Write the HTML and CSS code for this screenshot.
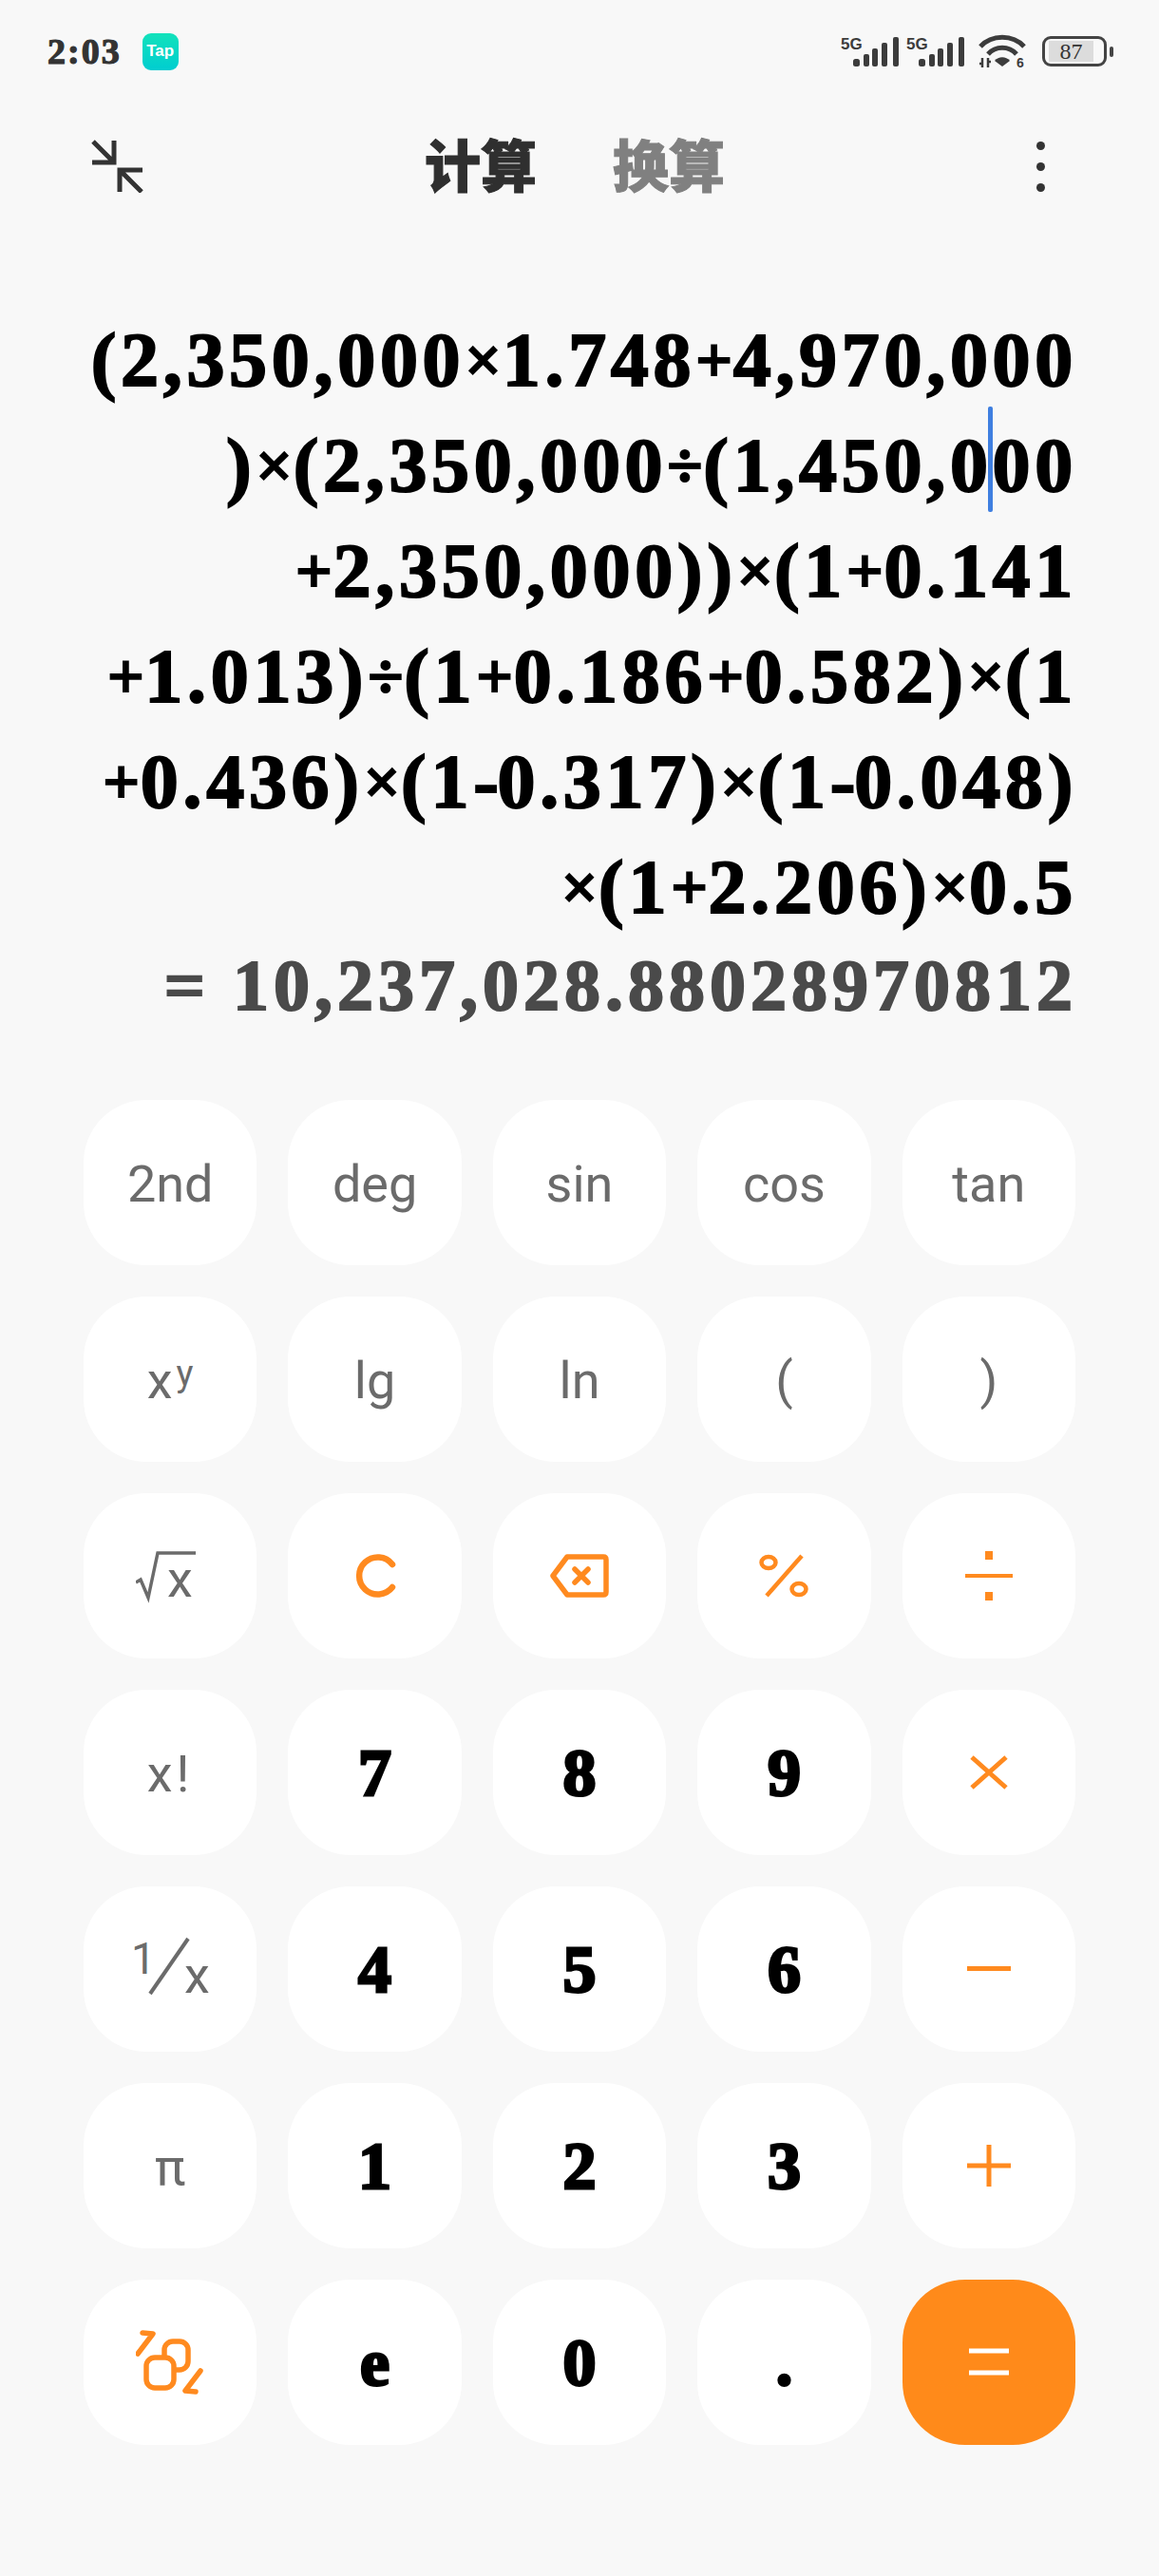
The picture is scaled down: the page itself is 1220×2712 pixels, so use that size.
FILE: index.html
```html
<!DOCTYPE html>
<html>
	<head>
		<meta charset="UTF-8">
		<title>计算器</title>
		<link rel="stylesheet" href="styles.css">
	</head>
	<body>
		<div class="status">
			<div class="status-left">
				<span class="time">2:03</span>
				<span class="tap">Tap</span>
			</div>
			<div class="status-right">
				<svg class="signal" width="63" height="34" viewBox="0 0 63 34">
					<text x="0" y="15" class="five-g">5G</text>
					<g fill="#3c3c3c">
						<rect x="13" y="25" width="7" height="8" rx="2.5"/>
						<rect x="24" y="20" width="6" height="13" rx="2"/>
						<rect x="33" y="14" width="6" height="19" rx="2"/>
						<rect x="43" y="8" width="6" height="25" rx="2"/>
						<rect x="55" y="2" width="6" height="31" rx="2"/>
					</g>
				</svg>
				<svg class="signal" width="63" height="34" viewBox="0 0 63 34">
					<text x="0" y="15" class="five-g">5G</text>
					<g fill="#3c3c3c">
						<rect x="13" y="25" width="7" height="8" rx="2.5"/>
						<rect x="24" y="20" width="6" height="13" rx="2"/>
						<rect x="33" y="14" width="6" height="19" rx="2"/>
						<rect x="43" y="8" width="6" height="25" rx="2"/>
						<rect x="55" y="2" width="6" height="31" rx="2"/>
					</g>
				</svg>
				<svg class="wifi" width="50" height="42" viewBox="0 -2 50 42">
					<g fill="none" stroke="#3c3c3c" stroke-width="5">
						<path d="M2 14 C14 1 36 1 48 14"/>
						<path d="M10 22 C18 13 32 13 40 22"/>
					</g>
					<path d="M17 29 C21 24 29 24 33 29 L25 35 Z" fill="#3c3c3c"/>
					<path d="M4 26 V36 M1 32 H4 M10 26 V36 M10 30 H13" stroke="#3c3c3c" stroke-width="2.5" fill="none"/>
					<text x="40" y="36" class="wifi-six">6</text>
				</svg>
				<div class="battery">
					<div class="battery-body"><span class="battery-level">87</span></div>
					<div class="battery-nub"></div>
				</div>
			</div>
		</div>

		<div class="toolbar">
			<svg class="collapse" width="56" height="56" viewBox="0 0 56 56">
				<path d="M2 2 L24 24 M24 1 V24 H1 M30 32 L53 55 M30 55 V32 H54" fill="none" stroke="#333" stroke-width="5"/>
			</svg>
			<div class="tabs">
				<span class="tab tab-on">计算</span>
				<span class="tab">换算</span>
			</div>
			<div class="more"><i></i><i></i><i></i></div>
		</div>

		<div class="display">
			<div class="line">(2,350,000<span class="o">×</span>1.748<span class="o">+</span>4,970,000</div>
			<div class="line">)<span class="o">×</span>(2,350,000<span class="o">÷</span>(1,450,0<span class="caret"></span>00</div>
			<div class="line"><span class="o">+</span>2,350,000))<span class="o">×</span>(1<span class="o">+</span>0.141</div>
			<div class="line"><span class="o">+</span>1.013)<span class="o">÷</span>(1<span class="o">+</span>0.186<span class="o">+</span>0.582)<span class="o">×</span>(1</div>
			<div class="line"><span class="o">+</span>0.436)<span class="o">×</span>(1<span class="h">-</span>0.317)<span class="o">×</span>(1<span class="h">-</span>0.048)</div>
			<div class="line"><span class="o">×</span>(1<span class="o">+</span>2.206)<span class="o">×</span>0.5</div>
			<div class="result">= 10,237,028.88028970812</div>
		</div>

		<div class="keys">
			<div class="key fn">2nd</div>
			<div class="key fn">deg</div>
			<div class="key fn">sin</div>
			<div class="key fn">cos</div>
			<div class="key fn">tan</div>

			<div class="key fn">x<sup>y</sup></div>
			<div class="key fn">lg</div>
			<div class="key fn">ln</div>
			<div class="key fn">(</div>
			<div class="key fn">)</div>

			<div class="key fn icon">
				<svg class="root" width="64" height="72" viewBox="0 -10 64 72">
					<path d="M0 33 L5 30 L13 49 L23 2 H63" fill="none" stroke="#6b6b6b" stroke-width="3.5"/>
					<text x="33" y="48" class="svg-label">x</text>
				</svg>
			</div>
			<div class="key op">
				<svg width="44" height="46" viewBox="0 0 44 46">
					<path d="M40 11 A19.5 19.5 0 1 0 40 35" fill="none" stroke="#ff8a1f" stroke-width="6.5" stroke-linecap="round"/>
				</svg>
			</div>
			<div class="key op">
				<svg width="62" height="46" viewBox="0 0 62 46">
					<path d="M18 3 H56 Q59 3 59 6 V40 Q59 43 56 43 H18 L3 23 Z" fill="none" stroke="#ff8a1f" stroke-width="5.5" stroke-linejoin="round"/>
					<path d="M26 16 L40 30 M40 16 L26 30" stroke="#ff8a1f" stroke-width="5.5" stroke-linecap="round"/>
				</svg>
			</div>
			<div class="key op">
				<svg width="52" height="46" viewBox="0 0 52 46">
					<g fill="none" stroke="#ff8a1f" stroke-width="4.5">
						<ellipse cx="10" cy="9" rx="7.5" ry="6"/>
						<ellipse cx="42" cy="37" rx="7.5" ry="6"/>
						<path d="M45 2 L8 44"/>
					</g>
				</svg>
			</div>
			<div class="key op">
				<svg width="50" height="54" viewBox="0 0 50 54">
					<rect x="0" y="25" width="50" height="4" fill="#ff8a1f"/>
					<rect x="21" y="1" width="8" height="9" fill="#ff8a1f"/>
					<rect x="21" y="44" width="8" height="9" fill="#ff8a1f"/>
				</svg>
			</div>

			<div class="key fn wide">x!</div>
			<div class="key num">7</div>
			<div class="key num">8</div>
			<div class="key num">9</div>
			<div class="key op">
				<svg width="40" height="40" viewBox="0 0 40 40">
					<path d="M2 4 L38 36 M38 4 L2 36" stroke="#ff8a1f" stroke-width="5"/>
				</svg>
			</div>

			<div class="key fn icon">
				<svg width="82" height="84" viewBox="0 -9 82 84">
					<text x="0" y="38" class="svg-small">1</text>
					<path d="M20 59 L60 1" stroke="#6b6b6b" stroke-width="4"/>
					<text x="56" y="58" class="svg-label">x</text>
				</svg>
			</div>
			<div class="key num">4</div>
			<div class="key num">5</div>
			<div class="key num">6</div>
			<div class="key op">
				<svg width="46" height="6" viewBox="0 0 46 6">
					<rect x="0" y="0" width="46" height="5" fill="#ff8a1f"/>
				</svg>
			</div>

			<div class="key fn">π</div>
			<div class="key num">1</div>
			<div class="key num">2</div>
			<div class="key num">3</div>
			<div class="key op">
				<svg width="46" height="46" viewBox="0 0 46 46">
					<path d="M0 23 H46 M23 1 V45" stroke="#ff8a1f" stroke-width="5"/>
				</svg>
			</div>

			<div class="key op">
				<svg width="72" height="68" viewBox="0 0 72 68">
					<g fill="none" stroke="#ff8a1f" stroke-width="5.5" stroke-linecap="round" stroke-linejoin="round">
						<rect x="30" y="12" width="25" height="30" rx="9"/>
						<rect x="11" y="29" width="29" height="32" rx="9" fill="#fff"/>
						<path d="M2 25 L18 4 L7 3"/>
						<path d="M68 43 L52 64 L63 65"/>
					</g>
				</svg>
			</div>
			<div class="key num">e</div>
			<div class="key num">0</div>
			<div class="key num dot">.</div>
			<div class="key eq">
				<svg width="42" height="29" viewBox="0 0 42 29">
					<path d="M0 3 H42 M0 26 H42" stroke="#fff" stroke-width="5"/>
				</svg>
			</div>
		</div>
	</body>
</html>
```

FILE: styles.css
```css
body{
	margin: 0;
	width: 1220px;
	height: 2712px;
	overflow: hidden;
	background-color: #f8f8f8;
}

/* status bar */
.status{
	display: flex;
	justify-content: space-between;
	align-items: center;
	height: 108px;
	padding: 0 48px 0 50px;
}
.status-left{
	display: flex;
	align-items: center;
	gap: 22px;
}
.time{
	font: bold 38px "Liberation Serif", serif;
	letter-spacing: 2px;
	color: #333;
	-webkit-text-stroke: 1.2px #333;
}
.tap{
	display: flex;
	align-items: center;
	justify-content: center;
	width: 38px;
	height: 39px;
	border-radius: 9px;
	background: linear-gradient(#12e2bb, #00cdd0);
	color: #fff;
	font: bold 17px "Liberation Sans", sans-serif;
}
.status-right{
	display: flex;
	align-items: center;
	gap: 6px;
}
.five-g{
	font: bold 17px "Liberation Sans", sans-serif;
	fill: #3c3c3c;
}
.wifi{
	margin-left: 7px;
}
.wifi-six{
	font: bold 14px "Liberation Sans", sans-serif;
	fill: #3c3c3c;
}
.battery{
	display: flex;
	align-items: center;
	gap: 3px;
	margin-left: 11px;
}
.battery-body{
	box-sizing: border-box;
	width: 68px;
	height: 32px;
	padding: 2px 11px 2px 4px;
	border: 3px solid #444;
	border-radius: 9px;
}
.battery-level{
	display: block;
	height: 100%;
	background-color: #dcdcdc;
	font: 24px/22px "Liberation Serif", serif;
	text-align: center;
	color: #333;
}
.battery-nub{
	width: 4px;
	height: 11px;
	border-radius: 2px;
	background-color: #444;
}

/* top bar */
.toolbar{
	display: grid;
	grid-template-columns: 1fr auto 1fr;
	align-items: center;
	height: 134px;
	padding: 0 120px 0 96px;
}
.tabs{
	display: flex;
	gap: 80px;
	margin: 0 0 7px 14px;
}
.tab{
	font: 900 59px/1 "Noto Sans CJK SC", sans-serif;
	color: #808080;
	-webkit-text-stroke: 1px #808080;
}
.tab-on{
	color: #2f2f2f;
	-webkit-text-stroke: 1px #2f2f2f;
}
.more{
	display: flex;
	flex-direction: column;
	gap: 13px;
	justify-self: end;
}
.more i{
	display: block;
	width: 9px;
	height: 9px;
	border-radius: 50%;
	background-color: #333;
}

/* expression */
.display{
	padding: 82px 86px 0 0;
	text-align: right;
	font-family: "Liberation Serif", serif;
	font-weight: bold;
}
.line{
	height: 111px;
	font-size: 80px;
	line-height: 111px;
	letter-spacing: 4.7px;
	color: #000;
	-webkit-text-stroke: 2px #000;
}
/* 运算符比数字窄,单独缩小 */
.o{
	font-size: 68px;
	letter-spacing: 0.7px;
	vertical-align: 4px;
	line-height: 0;
}
.h{
	letter-spacing: -1.3px;
}
.caret{
	position: relative;
}
.caret::after{
	content: "";
	position: absolute;
	left: -5px;
	top: -18px;
	width: 5px;
	height: 111px;
	border-radius: 2px;
	background-color: #3f7fe0;
}
.result{
	height: 96px;
	font-size: 76px;
	line-height: 94px;
	letter-spacing: 5px;
	color: #4a4a4a;
	-webkit-text-stroke: 2px #4a4a4a;
}

/* keypad */
.keys{
	display: grid;
	grid-template-columns: repeat(5, 1fr);
	grid-auto-rows: 174.5px;
	gap: 32.5px 33px;
	padding: 71.5px 88px 0;
}
.key{
	display: flex;
	align-items: center;
	justify-content: center;
	border-radius: 66px;
	background-color: #fff;
}
.fn{
	box-sizing: border-box;
	padding-top: 4px;
	font: 400 54px "Roboto", sans-serif;
	color: #6b6b6b;
}
.fn sup{
	margin: -16px 0 0 4px;
	font-size: 38px;
	line-height: 1;
}
.fn.icon{
	padding-top: 0;
}
.root{
	margin-right: 8px;
}
.wide{
	letter-spacing: 4px;
}
.svg-label{
	font: 400 54px "Roboto", sans-serif;
	fill: #6b6b6b;
}
.svg-small{
	font: 400 46px "Roboto", sans-serif;
	fill: #6b6b6b;
}
.num{
	box-sizing: border-box;
	padding-top: 3px;
	font: bold 70px "Liberation Serif", serif;
	color: #000;
	-webkit-text-stroke: 3px #000;
}
.eq{
	background-color: #ff8a1a;
}
```
